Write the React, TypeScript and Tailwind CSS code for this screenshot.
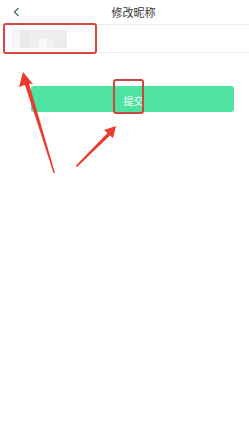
import React from "react";

export default function App() {
  return (
    <div className="relative w-[249px] h-[426px] bg-white overflow-hidden" style={{ fontFamily: '"Noto Sans CJK SC", "Noto Sans", sans-serif' }}>
      <div className="relative flex items-center h-[25px] border-b border-[#ececec]">
        <svg className="absolute left-[13px] top-[7px]" width="7" height="10" viewBox="0 0 7 10">
          <path d="M5.5 1 L1.5 5 L5.5 9" fill="none" stroke="#3f6f63" strokeWidth="1.3" />
        </svg>
        <div className="flex-1 text-center pl-[18px] text-[11px] leading-none text-[#333]">修改昵称</div>
      </div>
      <div className="flex items-center h-[28px] border-b border-[#ececec] pl-[12px]">
        <div className="flex flex-col w-[55px] h-[18px] opacity-80">
          <div className="flex h-[9px]">
            <div className="w-[8px] bg-[#f4f4f4]" />
            <div className="w-[10px] bg-[#e6e6e6]" />
            <div className="w-[37px] bg-[#ebebeb]" />
          </div>
          <div className="flex h-[9px]">
            <div className="w-[8px] bg-[#f6f6f6]" />
            <div className="w-[10px] bg-[#e4e4e4]" />
            <div className="w-[9px] bg-[#ececec]" />
            <div className="w-[8px] bg-[#f9f9f9]" />
            <div className="w-[8px] bg-[#eeeeee]" />
            <div className="w-[12px] bg-[#e8e8e8]" />
          </div>
        </div>
      </div>
      <div className="pt-[33px] pl-[31px] pr-[15px]">
        <div className="flex items-center justify-center h-[26px] rounded-[3px] bg-[#4ee3a0] pl-[2px] pt-[2px] text-[10px] text-[#f4fff9]">提交</div>
      </div>

      <div className="absolute left-[3px] top-[23px] w-[94px] h-[31px] border-2 border-[#d9463e] rounded-[3px]" />
      <div className="absolute left-[113px] top-[79px] w-[31px] h-[35px] border-2 border-[#c9473e] rounded-[3px]" />

      <svg className="absolute left-0 top-0" width="249" height="426" viewBox="0 0 249 426">
        <polygon points="23,72 33,84 29,83.5 55,173 53.5,173 25,85 19,87" fill="#ea3b2e" />
        <polygon points="116,126 113,138 110,135.5 77,167 75.5,166 107.5,133 104,130" fill="#ea3b2e" />
      </svg>
    </div>
  );
}
